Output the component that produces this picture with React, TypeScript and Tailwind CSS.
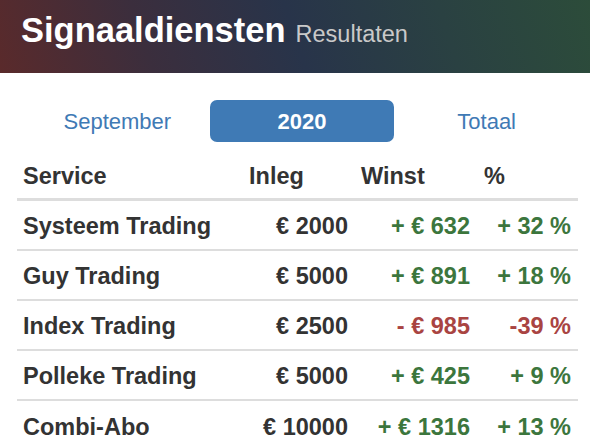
import React, { useState } from 'react';

interface Row {
  service: string;
  inleg: string;
  winst: string;
  pct: string;
  negative?: boolean;
}

const rows: Row[] = [
  { service: 'Systeem Trading', inleg: '€ 2000', winst: '+ € 632', pct: '+ 32 %' },
  { service: 'Guy Trading', inleg: '€ 5000', winst: '+ € 891', pct: '+ 18 %' },
  { service: 'Index Trading', inleg: '€ 2500', winst: '- € 985', pct: '-39 %', negative: true },
  { service: 'Polleke Trading', inleg: '€ 5000', winst: '+ € 425', pct: '+ 9 %' },
  { service: 'Combi-Abo', inleg: '€ 10000', winst: '+ € 1316', pct: '+ 13 %' },
];

const tabs = ['September', '2020', 'Totaal'];

export default function App() {
  const [active, setActive] = useState('2020');

  return (
    <div className="w-[590px] h-[448px] overflow-hidden bg-white font-[family-name:'Liberation_Sans',Arial,sans-serif] text-[#333]">
      <div className="h-[73px] px-[21px] pt-[10px] flex items-baseline gap-[10px] bg-[linear-gradient(72deg,#5a2a2b_0%,#3b2e3d_25%,#28344a_50%,#2a4142_75%,#2c4c3a_100%)]">
        <h1 className="text-[34.5px] leading-[40px] font-bold text-white">Signaaldiensten</h1>
        <span className="text-[23.5px] leading-[40px] text-[#c9c9c9]">Resultaten</span>
      </div>

      <div className="mt-[27px] ml-[25px] w-[554px] grid grid-cols-3">
        {tabs.map((tab) => (
          <button
            key={tab}
            onClick={() => setActive(tab)}
            className={`h-[42px] rounded-[7px] text-[22px] ${
              active === tab ? 'bg-[#3f7ab5] text-white font-bold' : 'text-[#3f7ab5]'
            }`}
          >
            {tab}
          </button>
        ))}
      </div>

      <div className="ml-[17px] w-[561px]">
        <div className="grid grid-cols-[224px_112px_123px_102px] text-[23.5px] font-bold leading-[28px] pt-[20px] pb-[8px] border-b-[3px] border-[#dddddd]">
          <div className="pl-[6px]">Service</div>
          <div className="pl-[8px]">Inleg</div>
          <div className="pl-[8px]">Winst</div>
          <div className="pl-[8px]">%</div>
        </div>
        {rows.map((row, i) => (
          <div
            key={row.service}
            className={`grid grid-cols-[224px_112px_123px_102px] text-[23.5px] font-bold h-[50px] pt-[3px] items-center ${
              i < rows.length - 1 ? 'border-b-2 border-[#dddddd]' : ''
            }`}
          >
            <div className="pl-[6px]">{row.service}</div>
            <div className="pr-[5px] text-right">{row.inleg}</div>
            <div className={`pr-[6px] text-right ${row.negative ? 'text-[#a94442]' : 'text-[#3c763d]'}`}>{row.winst}</div>
            <div className={`pr-[7px] text-right ${row.negative ? 'text-[#a94442]' : 'text-[#3c763d]'}`}>{row.pct}</div>
          </div>
        ))}
      </div>
    </div>
  );
}
